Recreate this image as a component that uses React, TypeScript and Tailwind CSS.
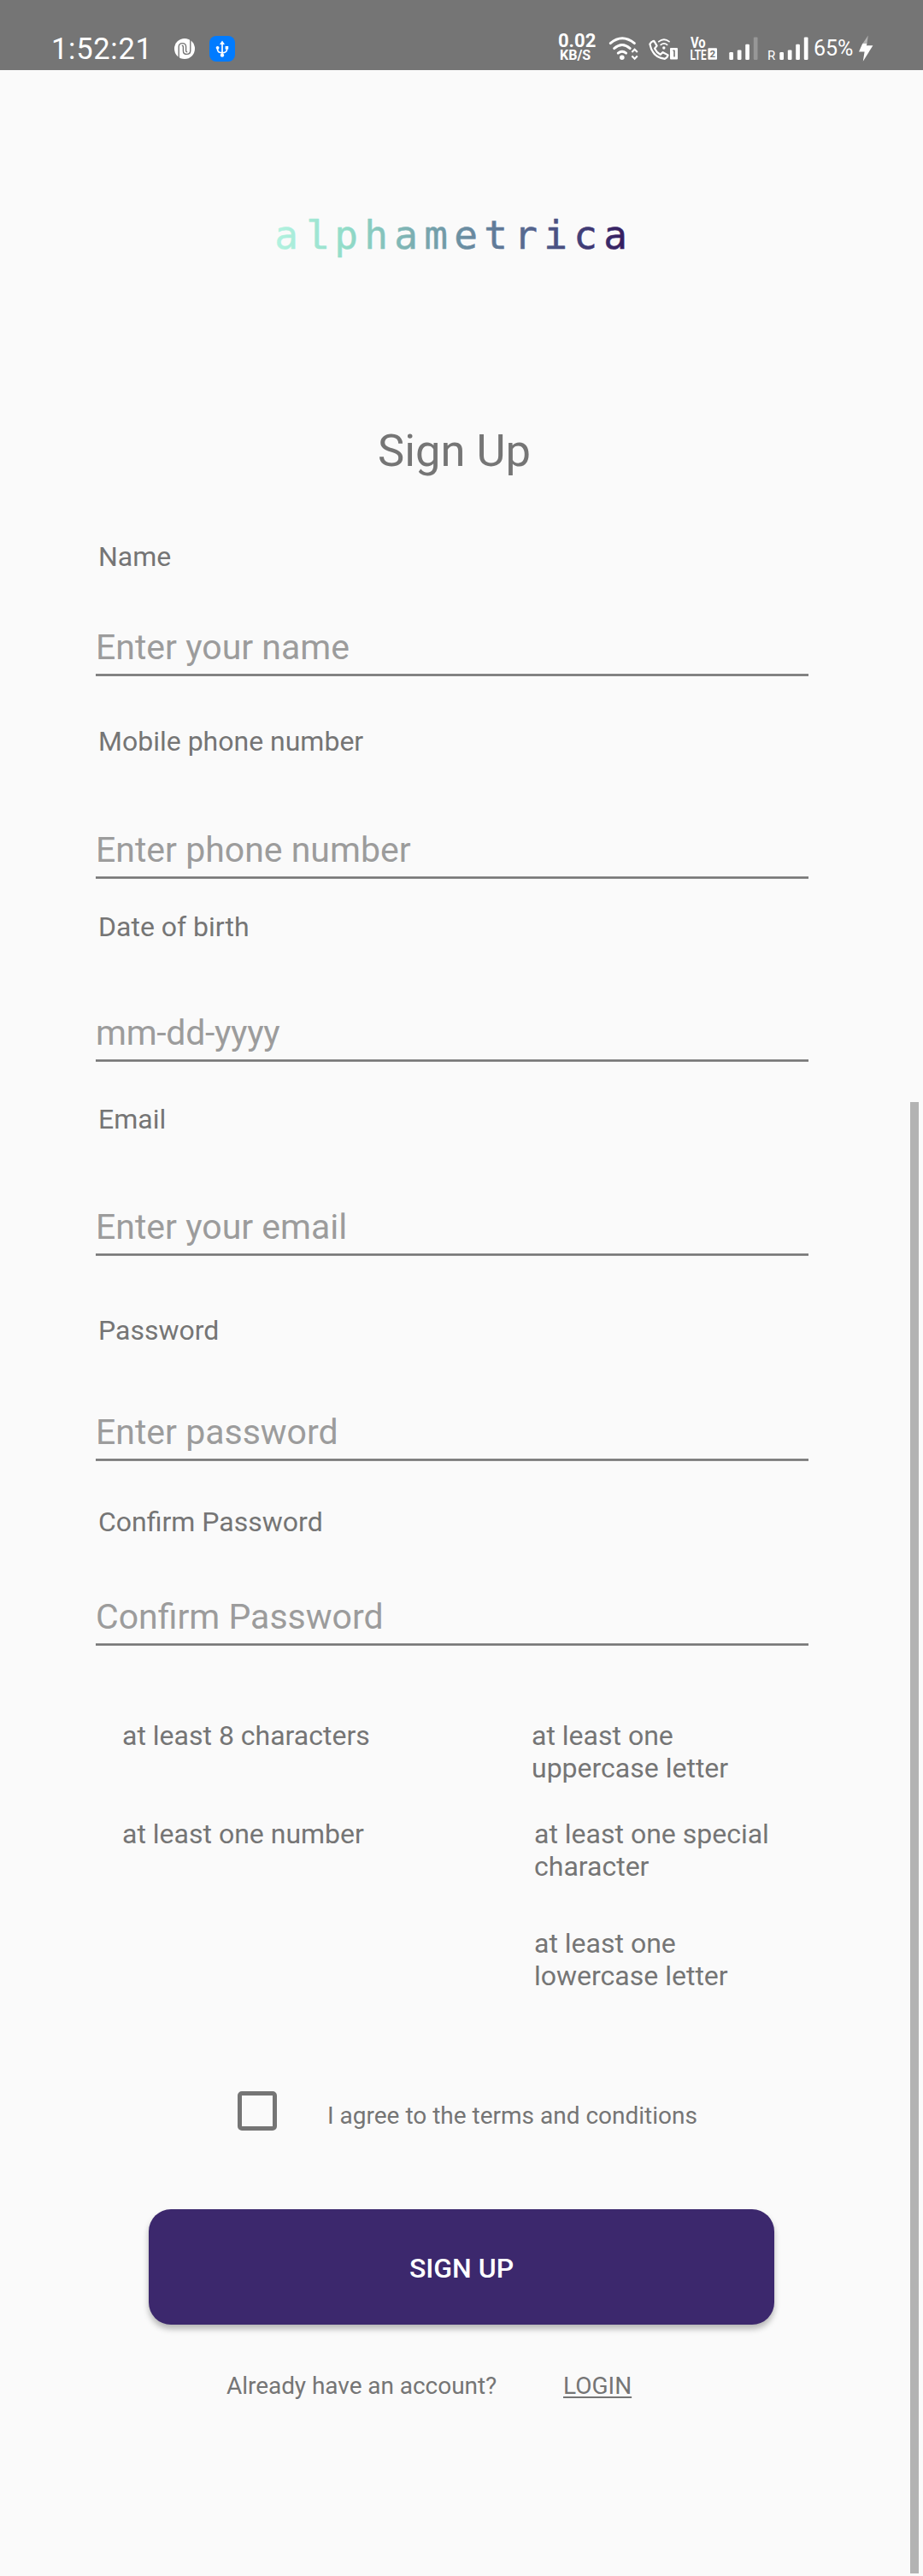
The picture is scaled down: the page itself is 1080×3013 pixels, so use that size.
const FIELDS = [
  { label: 'Name', hint: 'Enter your name', above: 'pt-[74px]', between: 'mt-[63px]' },
  { label: 'Mobile phone number', hint: 'Enter phone number', above: 'pt-[57px]', between: 'mt-[84px]' },
  { label: 'Date of birth', hint: 'mm-dd-yyyy', above: 'pt-[37px]', between: 'mt-[81px]' },
  { label: 'Email', hint: 'Enter your email', above: 'pt-[48px]', between: 'mt-[83px]' },
  { label: 'Password', hint: 'Enter password', above: 'pt-[68px]', between: 'mt-[76px]' },
  { label: 'Confirm Password', hint: 'Confirm Password', above: 'pt-[52px]', between: 'mt-[68px]' },
];

function NotificationIcons() {
  return (
    <svg className="h-[82px] w-[80px] shrink-0" viewBox="200 0 80 82" fill="none">
      <circle cx="216" cy="57" r="12" fill="#fff" />
      <path
        d="M209.2 70V54.6Q209.4 50.6 213.4 50.6Q217.6 50.6 217.6 54.6V59.2Q217.6 60.8 219.2 60.8M222.8 44V59.4Q222.6 63.4 218.6 63.4Q214.4 63.4 214.4 59.4V54.8Q214.4 53.2 212.8 53.2"
        stroke="#757575"
        strokeWidth="1.4"
      />
      <rect x="245" y="42" width="30" height="30" rx="8" fill="#007bff" />
      <path
        d="M260 51V64M254.6 56V58.5Q254.8 61.4 260 61.8Q265.2 61.4 265.4 58.5V56"
        stroke="#fff"
        strokeWidth="1.7"
        strokeLinejoin="round"
      />
      <path d="M260 47.5L263 52H257Z" fill="#fff" />
      <circle cx="254.6" cy="55.8" r="1.9" fill="#fff" />
      <rect x="263.6" y="54" width="3.6" height="3.6" fill="#fff" />
      <circle cx="260" cy="64.6" r="2.2" fill="#fff" />
    </svg>
  );
}

function WifiIcon() {
  return (
    <svg className="h-[82px] w-[50px] shrink-0" viewBox="705 0 50 82" fill="none" stroke="#fff" strokeWidth="2.9" strokeLinecap="round">
      <path d="M714.2 50.6Q728 38.8 742.4 50.6" />
      <path d="M718.6 56.6Q728 48.4 737.2 56.6" />
      <path d="M723.2 62.2Q728 58.4 732.6 62.2" />
      <circle cx="727.8" cy="67.2" r="2.8" fill="#fff" stroke="none" />
      <path d="M739.4 61L742.6 57.8L745.8 61M739.4 65.6L742.6 68.8L745.8 65.6" strokeWidth="2.1" strokeLinecap="butt" />
    </svg>
  );
}

function WifiCallIcon() {
  return (
    <svg className="h-[82px] w-[45px] shrink-0" viewBox="755 0 45 82" fill="none" stroke="#fff" strokeWidth="2.2" strokeLinecap="round" strokeLinejoin="round">
      <path d="M760.4 51.5Q762 48.6 765.2 47.8L768.6 53.6L766 56.8Q768.2 61.4 772.6 63.8L775.6 61.2L781.6 64.4Q781 67.6 778 68.8Q763.4 67.2 760.4 51.5Z" />
      <path d="M770.8 48.6Q777 43.8 783 48.6M773.2 52.4Q777 49.4 780.6 52.4" strokeWidth="1.8" />
      <circle cx="776.8" cy="56" r="1.7" fill="#fff" stroke="none" />
      <rect x="784" y="56" width="9" height="13.4" rx="1" fill="#fff" stroke="none" />
      <path d="M787.4 59.2H789V66.4" stroke="#757575" strokeWidth="1.6" strokeLinecap="butt" />
    </svg>
  );
}

function VolteIcon() {
  return (
    <svg className="h-[82px] w-[50px] shrink-0 font-[Roboto] font-bold" viewBox="800 0 50 82" fill="#fff">
      <text x="808" y="56.4" fontSize="17.6" textLength="17.6" lengthAdjust="spacingAndGlyphs">Vo</text>
      <text x="807.6" y="69.6" fontSize="16.4" textLength="19" lengthAdjust="spacingAndGlyphs">LTE</text>
      <rect x="828.4" y="56.2" width="10.6" height="13.6" rx="1" />
      <text x="830.6" y="67.2" fontSize="11.5" fill="#757575">2</text>
    </svg>
  );
}

function SignalBars({ weak = false }: { weak?: boolean }) {
  return (
    <svg className="h-[82px] w-[34px] shrink-0" viewBox="0 0 34 82" fill="#fff">
      <rect x="0.3" y="61" width="4.7" height="9" rx="1.2" />
      <rect x="9.8" y="58.4" width="4.7" height="11.6" rx="1.2" />
      <rect x="19.2" y="51.8" width="4.7" height="18.2" rx="1.2" />
      <rect x="28.8" y="43.4" width="4.7" height="26.6" rx="1.2" opacity={weak ? 0.25 : 1} />
    </svg>
  );
}

function ChargeIcon() {
  return (
    <svg className="h-[82px] w-[25px] shrink-0" viewBox="1000 0 25 82" fill="#fff">
      <path d="M1015.8 41.6L1009 51.6H1014.4Z" opacity="0.45" />
      <path d="M1009.2 51H1014.4L1013.8 53.2H1021.4L1009.8 71.8L1011.6 60.4H1005Z" />
    </svg>
  );
}

function StatusBar() {
  return (
    <header className="flex h-[82px] items-start overflow-hidden bg-[#757575] text-white">
      <div className="ml-[60px] mt-[36px] w-[140px] shrink-0 text-[34.5px] leading-[42px] tracking-[0.7px]">1:52:21</div>
      <NotificationIcons />
      <div className="ml-[370px] mt-[38px] flex w-[55px] shrink-0 flex-col font-bold">
        <span className="ml-[3px] text-[22px] leading-[20px]">0.02</span>
        <span className="ml-[5px] text-[16px] leading-[14px]">KB/S</span>
      </div>
      <WifiIcon />
      <WifiCallIcon />
      <VolteIcon />
      <div className="ml-[3px] shrink-0">
        <SignalBars weak />
      </div>
      <div className="ml-[11px] mt-[56px] w-[14px] shrink-0 text-[15px] leading-[18px]">R</div>
      <SignalBars />
      <div className="ml-[6px] mt-[42px] w-[48px] shrink-0 text-[25px] leading-[30px]">65%</div>
      <ChargeIcon />
    </header>
  );
}

function Logo() {
  return (
    <svg className="mt-[148px] ml-[300px] h-[100px] w-[460px]" viewBox="0 0 460 100" role="img" aria-label="alphametrica">
      <defs>
        <linearGradient id="brand" gradientUnits="userSpaceOnUse" x1="23" y1="0" x2="432" y2="0">
          <stop offset="0" stopColor="#b2f2e0" />
          <stop offset="0.2" stopColor="#92dcc8" />
          <stop offset="0.45" stopColor="#75a1ab" />
          <stop offset="0.72" stopColor="#56678f" />
          <stop offset="0.88" stopColor="#403d76" />
          <stop offset="1" stopColor="#351c5e" />
        </linearGradient>
      </defs>
      <text
        y="61.4"
        x="35 70 105 140 175 210 245 280 315 350 385 420"
        textAnchor="middle"
        className="font-['DejaVu_Sans_Mono',monospace] text-[46px]"
        fill="url(#brand)"
        stroke="url(#brand)"
        strokeWidth="0.5"
        strokeLinejoin="round"
      >
        a<tspan className="font-['Liberation_Mono',monospace] text-[48px]">l</tspan>phametrica
      </text>
    </svg>
  );
}

function Field({ label, hint, above, between }: (typeof FIELDS)[number]) {
  return (
    <div className={above}>
      <label className="ml-[3px] block text-[32px] leading-[38px]">{label}</label>
      <div className={between}>
        <div className={`h-[55px] text-[41px] leading-[48px] text-[#9c9c9c] ${hint === 'mm-dd-yyyy' ? 'tracking-[-0.3px]' : ''}`}>{hint}</div>
        <div className="h-[3px] border-y border-[#8e8e8e] bg-[#757575]" />
      </div>
    </div>
  );
}

export default function App() {
  return (
    <div className="relative h-[3013px] w-[1080px] overflow-hidden bg-[#fafafa] font-[Roboto,sans-serif] text-[#757575]">
      <StatusBar />
      <Logo />
      <h1 className="mt-[166px] ml-[442px] text-[52.5px] leading-[62px]">Sign Up</h1>

      <form className="ml-[112px] w-[834px]">
        {FIELDS.map((f) => (
          <Field key={f.label} {...f} />
        ))}
      </form>

      <div className="mt-[86px] ml-[143px] flex text-[32px] leading-[38px]">
        <ul className="w-[479px]">
          <li className="h-[115px]">at least 8 characters</li>
          <li>at least one number</li>
        </ul>
        <ul>
          <li className="h-[115px]">
            at least one
            <br />
            uppercase letter
          </li>
          <li className="ml-[3px] h-[128px]">
            at least one special
            <br />
            character
          </li>
          <li className="ml-[3px]">
            at least one
            <br />
            lowercase letter
          </li>
        </ul>
      </div>

      <div className="mt-[116px] ml-[278px] flex h-[46px] items-start">
        <span className="size-[46px] rounded-[5px] border-[5px] border-[#757575]" />
        <span className="mt-[12px] ml-[59px] text-[28px] leading-[33px]">I agree to the terms and conditions</span>
      </div>

      <button className="mt-[92px] ml-[174px] flex h-[135px] w-[732px] items-center justify-center rounded-[26px] bg-[#3c286d] pt-[3px] text-[32px] leading-[38px] font-medium text-white shadow-[0_5px_7px_rgba(0,0,0,0.28)]">
        SIGN UP
      </button>

      <div className="mt-[55px] ml-[265px] flex text-[28px] leading-[33px]">
        <span className="w-[394px] tracking-[-0.05px]">Already have an account?</span>
        <a className="underline decoration-2 underline-offset-[3px]">LOGIN</a>
      </div>

      <div className="absolute top-[1289px] right-[5px] h-[1721px] w-[10px] bg-[#b3b3b3]" />
    </div>
  );
}
